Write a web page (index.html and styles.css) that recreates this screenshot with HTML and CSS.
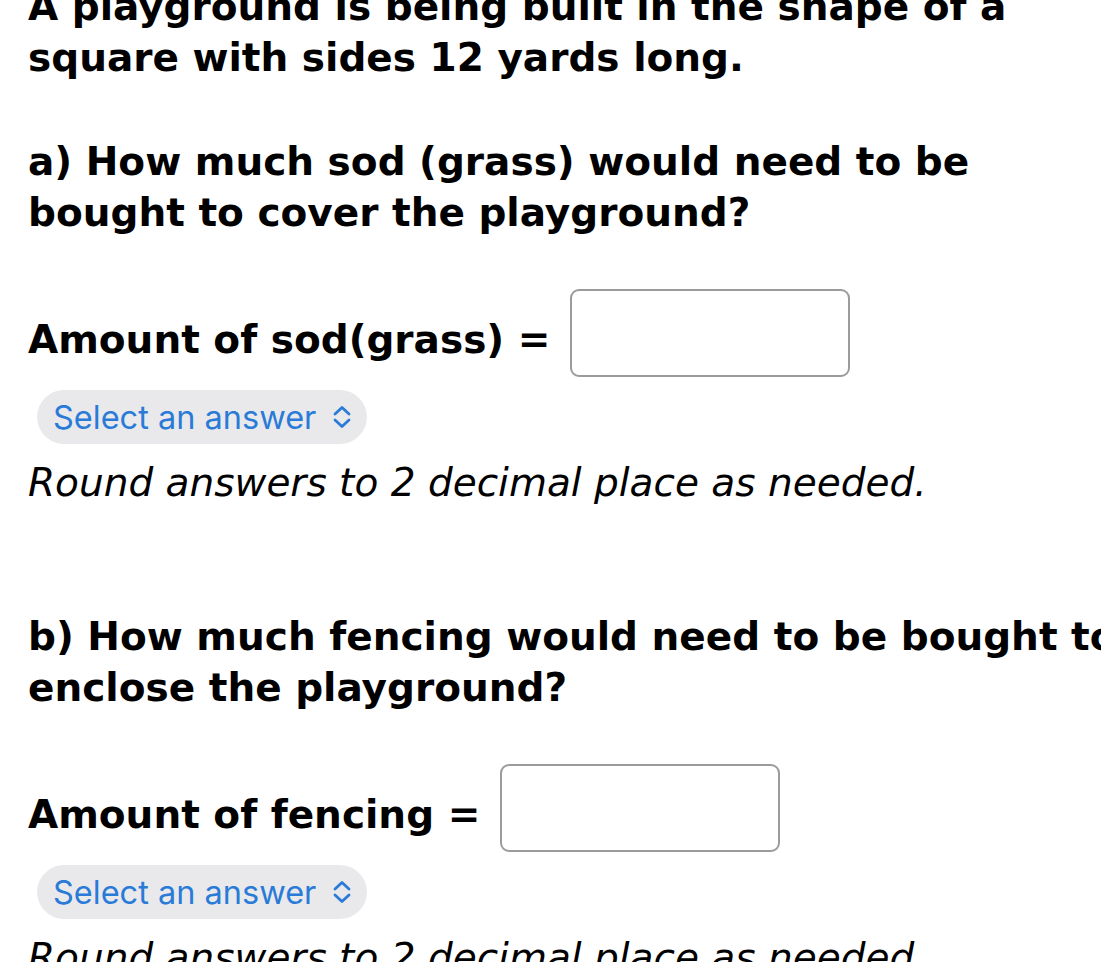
FILE: index.html
```html
<!DOCTYPE html>
<html>
<head>
<meta charset="utf-8">
<link rel="stylesheet" href="styles.css">
</head>
<body>
<div class="page">
  <p class="text intro">A playground is being built in the shape of a square with sides 12 yards long.</p>
  <section class="part">
    <p class="text question">a) How much sod (grass) would need to be bought to cover the playground?</p>
    <div class="answer-row">
      <span class="text label">Amount of sod(grass) =</span>
      <span class="input"></span>
    </div>
    <div class="select">
      <span>Select an answer</span>
      <svg class="chev" width="22" height="26" viewBox="0 0 22 26"><path d="M4 10 L11 3.5 L18 10 M4 16 L11 22.5 L18 16" fill="none" stroke="#2a7bd8" stroke-width="2.8" stroke-linecap="round" stroke-linejoin="round"/></svg>
    </div>
    <p class="text note">Round answers to 2 decimal place as needed.</p>
  </section>
  <section class="part part-b">
    <p class="text question">b) How much fencing would need to be bought to enclose the playground?</p>
    <div class="answer-row">
      <span class="text label">Amount of fencing =</span>
      <span class="input"></span>
    </div>
    <div class="select">
      <span>Select an answer</span>
      <svg class="chev" width="22" height="26" viewBox="0 0 22 26"><path d="M4 10 L11 3.5 L18 10 M4 16 L11 22.5 L18 16" fill="none" stroke="#2a7bd8" stroke-width="2.8" stroke-linecap="round" stroke-linejoin="round"/></svg>
    </div>
    <p class="text note">Round answers to 2 decimal place as needed.</p>
  </section>
</div>
</body>
</html>
```

FILE: styles.css
```css
html, body {
  margin: 0;
  padding: 0;
  background: #ffffff;
  overflow: hidden;
}
body {
  width: 1101px;
  height: 962px;
}
.page {
  width: 1105px;
  margin-top: -19px;
  padding-left: 28px;
  font-family: "DejaVu Sans", Verdana, sans-serif;
  color: #000;
}
.text {
  margin: 0;
  font-size: 39px;
  line-height: 51px;
}
.intro, .question, .label {
  font-weight: bold;
}
.intro {
  margin-bottom: 53px;
}
.part-b {
  margin-top: 103px;
}
.answer-row {
  display: flex;
  align-items: center;
  gap: 20px;
  margin-top: 51px;
}
.label {
  margin-top: 13px;
}
.input {
  display: block;
  width: 276px;
  height: 84px;
  border: 2px solid #9b9b9b;
  border-radius: 9px;
  background: #fff;
}
.select {
  display: inline-flex;
  align-items: center;
  gap: 15px;
  margin-top: 13px;
  margin-left: 9px;
  height: 54px;
  padding: 0 14px 0 16px;
  border-radius: 27px;
  background: #e9e9eb;
  font-family: Inter, "Liberation Sans", sans-serif;
  font-size: 32.5px;
  color: #2a7bd8;
}
.select + .note {
  margin-top: 13px;
}
.note {
  font-style: italic;
}
```
